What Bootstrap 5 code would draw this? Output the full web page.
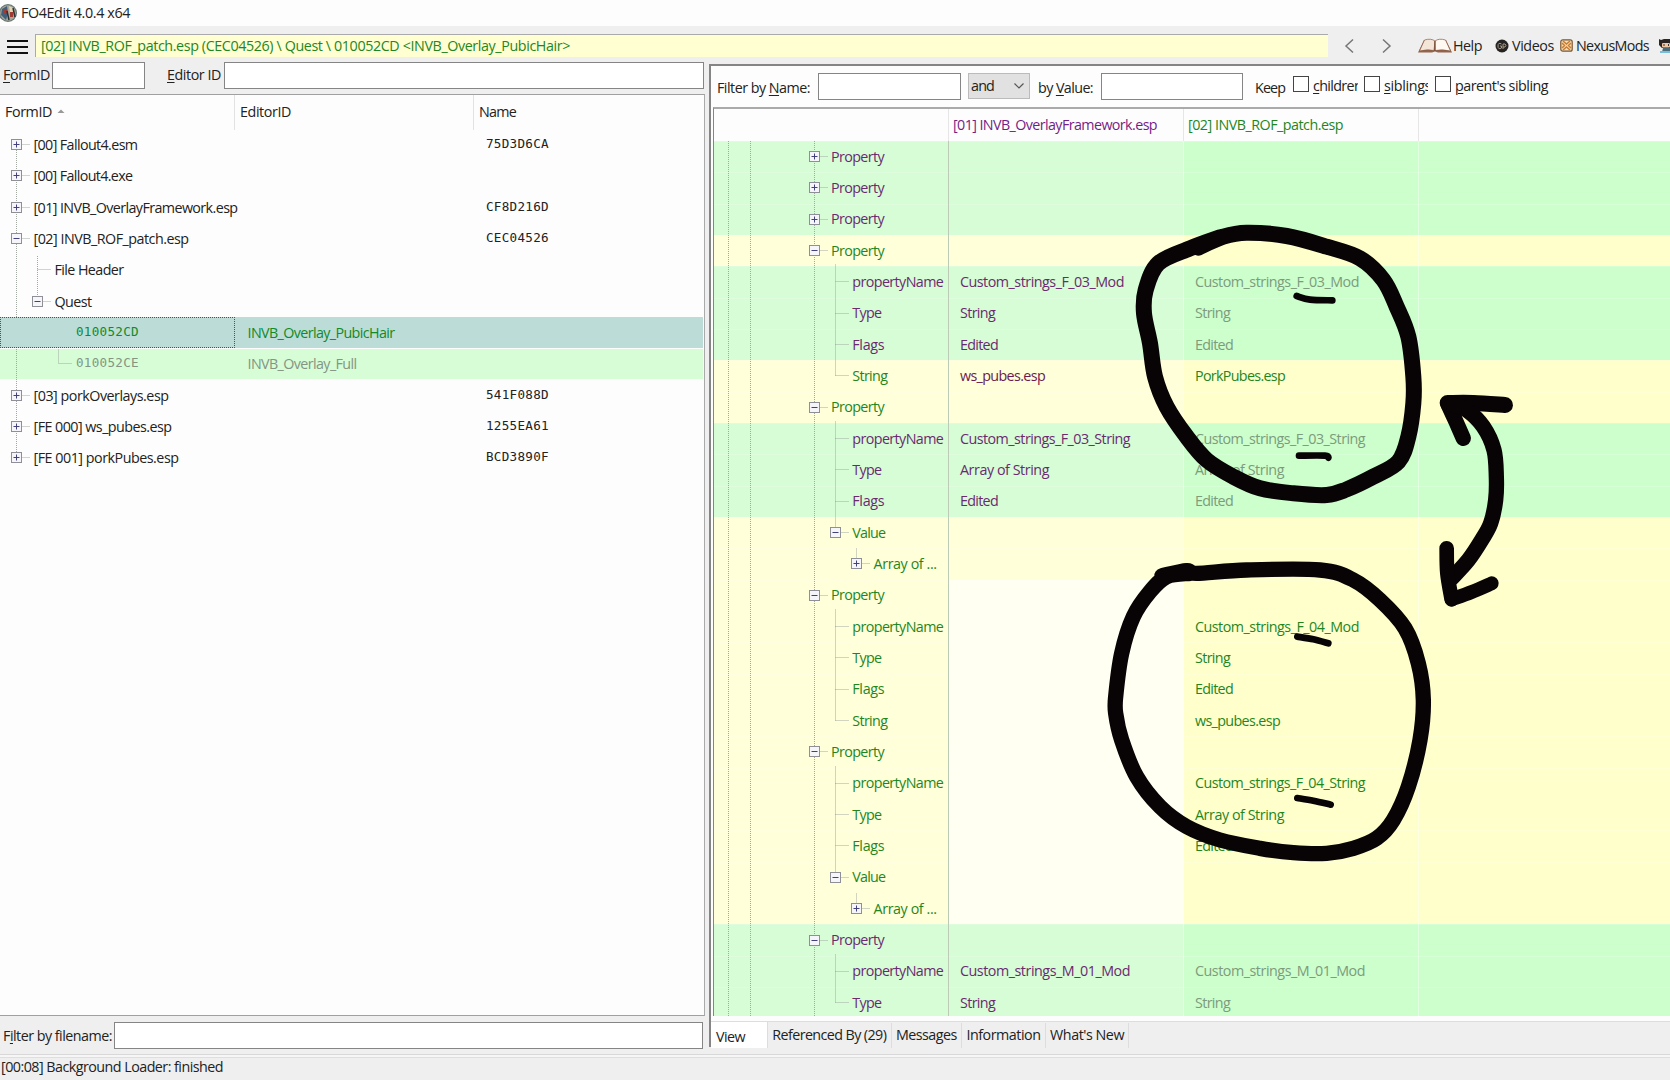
<!DOCTYPE html>
<html lang="en">
<head>
<meta charset="utf-8">
<title>FO4Edit 4.0.4 x64</title>
<link href="https://cdn.jsdelivr.net/npm/bootstrap@5.3.0/dist/css/bootstrap.min.css" rel="stylesheet">
<style>
html,body{height:100%}
body{font-family:"Open Sans","Noto Sans",sans-serif;font-size:14.3px;line-height:20px;color:#222;background:#efefef;overflow:hidden}
.app{width:1670px;height:1080px}
.app span{white-space:pre}
.titlebar{height:26px;background:#fdfdfd}
.toolbar{height:38px;background:#efefef;padding-top:2px}
.address{margin-left:7px;width:1293px;height:23px;background:#ffffd2;border-top:1px solid #aaa;border-left:1px solid #aaa;color:#1f861f}
.fld{background:#fff;border:1px solid #858585;height:27px}
.leftpane{width:705px;margin-top:-7px}
.idbar{height:37px}
.lefttree{background:#fdfdfd;border-top:1px solid #a0a0a0;border-right:1px solid #aaa;border-bottom:1px solid #a0a0a0;height:922px}
.lhead{height:35px}
.lhead>div{border-right:1px solid #e2e2e2}
.lrow{height:31.33px;width:703px}
.lrow.green{background:#d6fdd6;color:#849584;background-clip:content-box;padding-bottom:1px}
.lrow.sel{background:#bcdcd8;color:#128a25;height:30.5px;margin-bottom:.83px}
.lrow.sel>.c1{border:1px dotted #456}
.mono{font-family:"DejaVu Sans Mono",monospace;font-size:12.6px;position:relative;top:-1px}
.c1{width:235px}.c2{width:239px}
.nameline{height:40px}
.rightpane{border-left:2px solid #858585;border-top:2px solid #858585;background:#fdfdfd;margin-left:4px;height:983px}
.filterbar{height:41px}
.combo{width:62px;height:26px;background:#e1e1e1;border:1px solid #bbb}
.chk{width:16px;height:16px;border:1px solid #444;background:#fff}
.grid{margin-left:2px;border-top:2px solid #aaa;border-left:1px solid #858585}
.ghead{height:32.6px}
.grows{height:875.4px;overflow:hidden;position:relative}
.grow-line{height:31.34px;color:#1f861f}
.a{width:235px;border-right:1px solid #bbcbb6}
.b{width:235px}.c{width:235px}
.ghead .a,.ghead .b,.ghead .c{border-right:1px solid #e6e6e6}
.b,.c{border-right:1px solid #ffffff70}
.g .a,.g .b{background:#d6fdd6;color:#6b2a70}
.g .c,.g .d{background:#ccffcc;color:#7d9b7d}
.y .a,.y .b{background:#ffffd9}
.y .c,.y .d{background:#ffffcc}
.w .b{background:#fffff2}
.y .b{color:#6b1b50}
.grow-line>div{box-shadow:inset 0 1px #ffffff30}
.purple{color:#751d86}.grn{color:#1f861f}
.lines{left:0;top:0;pointer-events:none}
.tabstrip{height:27px;margin-top:5px;background:#efefef;border-top:1px solid #ddd}
.tabstrip>div{border-right:1px solid #ddd;height:25px;padding:2px 4.3px}
.tabstrip .on{background:#fff;width:57px;height:26px;padding:0}
.statusbar{border-top:1px solid #d8d8d8;height:27px;box-shadow:inset 0 2px #f6f6f6,inset 0 3px #dedede}
.ink{left:0;top:0;pointer-events:none;z-index:5}
u{text-underline-offset:2px;text-decoration-thickness:1px}
</style>
</head>
<body>
<div class="app d-flex flex-column position-relative overflow-hidden">
  <div class="titlebar d-flex align-items-center">
    <svg width="18" height="20" viewBox="0 0 18 20"><circle cx="8" cy="10" r="9" fill="#697674"/><circle cx="8" cy="10" r="7.8" fill="#a8a89a"/><path d="M2 6l5-3 1 7-2 7-5-5z" fill="#425f7d"/><path d="M4 6h3v5H4zM10 9h3v5h-3z" fill="#a33b32"/><path d="M9 3l4 2v4h-3z" fill="#e2d6b4"/><path d="M7 8l2 9M13 5l2 9" stroke="#2a3333" stroke-width="1.500"/></svg>
    <span style="margin-left:3px" data-w="109">FO4Edit 4.0.4 x64</span>
  </div>
  <div class="toolbar d-flex align-items-center flex-shrink-0">
    <svg width="28" height="20" viewBox="0 0 28 20"><path d="M7 5H28M7 11H28M7 17H28" stroke="#111" stroke-width="1.800"/></svg>
    <div class="address d-flex align-items-center"><span style="margin-left:5px" data-w="529">[02] INVB_ROF_patch.esp (CEC04526) \ Quest \ 010052CD &lt;INVB_Overlay_PubicHair&gt;</span></div>
    <svg width="90" height="20" viewBox="0 0 90 20" fill="none" stroke="#777" stroke-width="1.5"><path d="M25 3.500l-7 6.500 7 6.500M55 3.500l7 6.500-7 6.500"/></svg>
    <svg width="34" height="18" viewBox="0 0 34 18"><path d="M6 3L0 15.500h14l3-1 3 1h14L28 3 17 5z" fill="#94644c"/><path d="M6.500 3Q13 1 17 4L16 13.500Q10 12 1.500 14z" fill="#f3e6d8" stroke="#8a5a42" stroke-width=".7"/><path d="M17 4Q21 1 27.500 3l5 11Q24 12 17 13.500z" fill="#fff9f2" stroke="#8a5a42" stroke-width=".7"/><path d="M17 4v10" stroke="#6c4734"/></svg>
    <span style="margin-left:1px" data-w="29">Help</span>
    <svg style="margin-left:13px" width="14" height="14" viewBox="0 0 14 14"><circle cx="7" cy="7" r="6.500" fill="#252321"/><path d="M6.500 5Q3 3 3 7t3.500 2V7H5M8 10V5h2q2 1 0 3H8" fill="none" stroke="#a79a84" stroke-width="1"/></svg>
    <span style="margin-left:3px" data-w="42">Videos</span>
    <svg style="margin-left:6px" width="13" height="13" viewBox="0 0 13 13"><rect x=".8" y=".8" width="11.400" height="11.400" rx="2" fill="#f3dfba" stroke="#7c562f" stroke-width="1.200"/><path d="M3 2l3.500 3L10 2M3 11l3.500-3 3.500 3M2 4l2.500 2.500L2 9M11 4L8.500 6.500 11 9" stroke="#cd7b2e" stroke-width="1.500" fill="none"/></svg>
    <span style="margin-left:3px" data-w="73">NexusMods</span>
    <svg style="margin-left:10px" width="11" height="16" viewBox="0 0 11 16"><path d="M0 1l2 1 3-1h6v9H3L0 7z" fill="#2b2524"/><rect x="3" y="5" width="8" height="4.500" rx="1" fill="#efc5a2"/><path d="M5 6v2M9.500 6v2" stroke="#333"/><path d="M4 10h7v4H3z" fill="#4b6b7b"/><path d="M1 14h10" stroke="#78bed8" stroke-width="2"/></svg>
  </div>
  <div class="d-flex" style="height:990px">
    <div class="leftpane flex-shrink-0">
      <div class="idbar d-flex align-items-center">
        <span style="margin-left:3px" data-w="47"><u>F</u>ormID</span><div class="fld" style="width:93px;margin-left:2px"></div>
        <span style="margin-left:22px" data-w="54"><u>E</u>ditor ID</span><div class="fld" style="width:480px;margin-left:3px"></div>
      </div>
      <div class="lefttree">
        <div class="lhead d-flex align-items-center">
          <div class="c1 h-100 d-flex align-items-center"><span style="margin-left:5px" data-w="47">FormID</span><svg class="ms-1" width="10" height="8"><path d="M1.500 5L5 1.500 8.500 5z" fill="#999"/></svg></div>
          <div class="c2 h-100 d-flex align-items-center"><span style="margin-left:5px" data-w="51">EditorID</span></div>
          <span style="margin-left:5px" data-w="37">Name</span>
        </div>
        <div class="position-relative" id="ltree"></div>
      </div>
      <div class="nameline d-flex align-items-center">
        <span style="margin-left:3px" data-w="109">F<u>i</u>lter by filename:</span><div class="fld" style="width:589px;margin-left:2px"></div>
      </div>
    </div>
    <div class="rightpane flex-grow-1">
      <div class="filterbar d-flex align-items-center">
        <span style="margin-left:6px;padding-top:3px" data-w="93">Filter by <u>N</u>ame:</span><div class="fld" style="width:143px;margin-left:8px"></div>
        <div class="combo d-flex align-items-center justify-content-between" style="margin-left:7px"><span style="margin-left:2px" data-w="23">and</span><svg width="20" height="12" viewBox="0 0 20 12"><path d="M5.500 3.500l4.500 4.500 4.500-4.500" fill="none" stroke="#555" stroke-width="1.200"/></svg></div>
        <span style="margin-left:8px;padding-top:3px" data-w="55">by <u>V</u>alue:</span><div class="fld" style="width:142px;margin-left:8px"></div>
        <span style="margin-left:12px;padding-top:3px" data-w="30">Keep</span>
        <div class="chk" style="margin-left:8px;margin-bottom:5px"></div><div class="overflow-hidden" style="width:45px;margin-left:4px"><span data-w="49"><u>c</u>hildren</span></div>
        <div class="chk" style="margin-left:6px;margin-bottom:5px"></div><div class="overflow-hidden" style="width:44px;margin-left:4px"><span data-w="47"><u>s</u>iblings</span></div>
        <div class="chk" style="margin-left:7px;margin-bottom:5px"></div><span style="margin-left:4px" data-w="93"><u>p</u>arent's sibling</span>
      </div>
      <div class="grid">
        <div class="ghead d-flex">
          <div class="a"></div>
          <div class="b d-flex align-items-center"><span class="purple" style="margin-left:4px" data-w="204">[01] INVB_OverlayFramework.esp</span></div>
          <div class="c d-flex align-items-center"><span class="grn" style="margin-left:4px" data-w="155">[02] INVB_ROF_patch.esp</span></div>
        </div>
        <div class="grows" id="grows"></div>
      </div>
      <div class="tabstrip d-flex align-items-center">
        <div class="on d-flex align-items-center"><span style="margin-left:5px;padding-top:3px" data-w="29">View</span></div>
        <div><span data-w="114">Referenced By (29)</span></div>
        <div><span data-w="61">Messages</span></div>
        <div><span data-w="74">Information</span></div>
        <div><span data-w="74">What's New</span></div>
      </div>
    </div>
  </div>
  <div class="statusbar d-flex align-items-center"><span style="margin-left:1px" data-w="222">[00:08] Background Loader: finished</span></div>
  <svg class="ink position-absolute" width="1670" height="1080" fill="none" stroke="#080406" stroke-linecap="round" stroke-linejoin="round"><g id="ink" transform="translate(1080 210) scale(.33333)"></g></svg>
</div>
<script src="https://cdn.jsdelivr.net/npm/bootstrap@5.3.0/dist/js/bootstrap.bundle.min.js"></script>
<script>
// Expander button centred on x,y
const box=(x,y,open)=>`<rect x="${x-5}" y="${y-5}" width="10" height="10" fill="#f6f6fa" stroke="#8f8f98"/><path d="M${x-3} ${y}h6${open?'':`M${x} ${y-3}v6`}" stroke="#41417c"/>`;
const seg=d=>`<path d="${d}" stroke="#a2a8a2" stroke-dasharray="1 1"/>`;
// Left tree: level, expander, id, id width, editor id, width, checksum
const files=[
 [0,'+','[00] Fallout4.esm',104,'',0,'75D3D6CA'],[0,'+','[00] Fallout4.exe',99,'',0,''],
 [0,'+','[01] INVB_OverlayFramework.esp',204,'',0,'CF8D216D'],[0,'-','[02] INVB_ROF_patch.esp',155,'',0,'CEC04526'],
 [1,'','File Header',69,'',0,''],[1,'-','Quest',37,'',0,''],
 [2,'','010052CD',63,'INVB_Overlay_PubicHair',147,'','sel'],[2,'','010052CE',63,'INVB_Overlay_Full',109,'','green'],
 [0,'+','[03] porkOverlays.esp',135,'',0,'541F088D'],[0,'+','[FE 000] ws_pubes.esp',138,'',0,'1255EA61'],[0,'+','[FE 001] porkPubes.esp',145,'',0,'BCD3890F']];
let h='',s=seg('M16.500 14V188')+seg('M16.500 219V327')+seg('M37.500 126V172');
files.forEach((f,i)=>{
  const m=f[0]==2?'mono':'',x=[33.5,54.5,76][f[0]];
  h+=`<div class="lrow d-flex align-items-center ${f[7]||''}"><div class="c1 h-100 d-flex align-items-center"><span class="${m}" style="margin-left:${x-(f[7]=='sel'?1:0)}px" data-w="${f[3]}">${f[2]}</span></div><div class="c2">${f[4]?`<span style="margin-left:12.5px" data-w="${f[5]}">${f[4]}</span>`:''}</div>${f[6]?`<span class="mono" style="margin-left:12px" data-w="63">${f[6]}</span>`:''}</div>`;
  const y=Math.round(i*31.33+14)+.5, bx=16.5+21*f[0];
  if(i!=6) s+=seg(`M${bx} ${y}h14`);
  if(i==7) s+=seg(`M58.500 ${y-14}v14`);
  if(f[1]) s+=box(bx,y,f[1]=='-');
});
ltree.innerHTML=h+`<svg class="lines position-absolute" width="235" height="345" fill="none">${s}</svg>`;
// Record grid: shade, level, expander, label, first value, width, second value, width
const n='propertyName',R=[
 ['g',0,'+','Property'],['g',0,'+','Property'],['g',0,'+','Property'],['y',0,'-','Property'],
 ['g',1,'',n,'Custom_strings_F_03_Mod',164,'Custom_strings_F_03_Mod',164],['g',1,'','Type','String',35,'String',35],['g',1,'','Flags','Edited',38,'Edited',38],['y',1,'','String','ws_pubes.esp',85,'PorkPubes.esp',90],
 ['y',0,'-','Property'],['g',1,'',n,'Custom_strings_F_03_String',170,'Custom_strings_F_03_String',170],['g',1,'','Type','Array of String',89,'Array of String',89],['g',1,'','Flags','Edited',38,'Edited',38],['y',1,'-','Value'],['y',2,'+','Array of ...'],
 ['y w',0,'-','Property'],['y w',1,'',n,'',0,'Custom_strings_F_04_Mod',164],['y w',1,'','Type','',0,'String',35],['y w',1,'','Flags','',0,'Edited',38],['y w',1,'','String','',0,'ws_pubes.esp',85],
 ['y w',0,'-','Property'],['y w',1,'',n,'',0,'Custom_strings_F_04_String',170],['y w',1,'','Type','',0,'Array of String',89],['y w',1,'','Flags','',0,'Edited',38],['y w',1,'-','Value'],['y w',2,'+','Array of ...'],
 ['g',0,'-','Property'],['g',1,'',n,'Custom_strings_M_01_Mod',170,'Custom_strings_M_01_Mod',170],['g',1,'','Type','String',35,'String',35]];
const W={Property:53,propertyName:91,Type:29,Flags:32,String:35,Value:33,'Array of ...':63};
h='';s=seg('M14.500 0V876')+seg('M36.500 0V876')+seg('M100.500 0V876');
R.forEach((r,i)=>{
  const cell=(t,w)=>t?`<span style="margin-left:11px" data-w="${w}">${t}</span>`:'';
  h+=`<div class="grow-line d-flex ${r[0]}"><div class="a d-flex align-items-center"><span style="margin-left:${117+21.3*r[1]}px" data-w="${W[r[3]]}">${r[3]}</span></div><div class="b d-flex align-items-center">${cell(r[4],r[5])}</div><div class="c d-flex align-items-center">${cell(r[6],r[7])}</div><div class="d flex-grow-1"></div></div>`;
  const y=Math.round(i*31.34+15)+.5,bx=100.5+21*r[1];
  s+=seg(`M${bx} ${y}h14`);
  if(r[1]==1) s+=seg(`M121.500 ${y-(R[i-1][1]==0?17:31)}V${y}`);
  if(r[1]==2) s+=seg(`M${bx} ${y-15}v15`);
  if(r[2]) s+=box(bx,y,r[2]=='-');
});
grows.innerHTML=h+`<svg class="lines position-absolute" width="235" height="876" fill="none">${s}</svg>`;
// Tracking is derived from each label's nominal width
document.querySelectorAll('[data-w]').forEach(e=>{
  const r=document.createRange();r.selectNodeContents(e);
  e.style.letterSpacing=((+e.dataset.w-r.getBoundingClientRect().width)/e.textContent.length).toFixed(3)+'px';
});
// Freehand marker strokes, smoothed through their points
const strokes=[
 [48,[355,113,430,80,500,68,620,78,740,110,840,145,910,210,950,290,985,380,1000,500,1000,580,985,680,955,755,880,800,800,838,740,855,640,850,540,835,460,800,380,750,320,680,260,590,225,500,210,400,192,310,197,240,235,160,330,115,420,82]],
 [46,[246,1097,320,1082,350,1090,500,1080,720,1080,820,1110,900,1170,975,1255,1015,1360,1030,1470,1020,1590,985,1730,940,1830,890,1885,820,1915,740,1930,640,1928,540,1915,420,1890,320,1850,240,1790,170,1700,125,1590,107,1510,107,1460,125,1330,160,1220,210,1145,260,1100,330,1090]],
 [48,[1103,579,1180,579,1275,585]],[46,[1105,585,1128,635,1150,685]],
 [46,[1120,585,1160,600,1210,650,1242,720,1249,800,1247,870,1232,940,1205,990,1165,1050,1115,1105]],
 [44,[1100,1015,1102,1090,1115,1168]],[42,[1115,1168,1175,1146,1235,1120]],
 [20,[650,258,690,269,757,271]],[20,[657,737,735,737,745,743]],[20,[652,1280,700,1288,745,1300]],[20,[652,1764,700,1772,752,1784]]];
ink.innerHTML=strokes.map(([w,a])=>{
  const p=[];for(let i=0;i<a.length;i+=2)p.push([a[i],a[i+1]]);
  let d='M'+p[0];
  for(let i=0;i<p.length-1;i++){const A=p[i-1]||p[i],B=p[i],C=p[i+1],D=p[i+2]||C;
   d+=`C${B[0]+(C[0]-A[0])/6} ${B[1]+(C[1]-A[1])/6} ${C[0]-(D[0]-B[0])/6} ${C[1]-(D[1]-B[1])/6} ${C[0]} ${C[1]}`}
  return `<path d="${d}" stroke-width="${w}"/>`}).join('');
</script>
</body>
</html>
